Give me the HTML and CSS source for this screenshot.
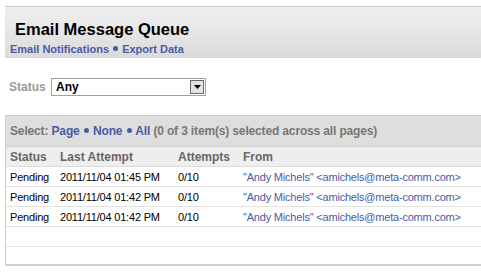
FILE: index.html
```html
<!DOCTYPE html>
<html>
<head>
<meta charset="utf-8">
<link rel="stylesheet" href="styles.css">
</head>
<body>
<div class="page">
  <div class="header">
    <h1 class="title">Email Message Queue</h1>
    <div class="nav">
      <a class="link" href="#">Email Notifications</a>
      <span class="dot"></span>
      <a class="link" href="#">Export Data</a>
    </div>
  </div>
  <div class="filter">
    <span class="filter-label">Status</span>
    <div class="select">
      <span class="select-value">Any</span>
      <span class="select-btn"><svg width="7" height="4" viewBox="0 0 7 4"><polygon points="0,0 7,0 3.5,4" fill="#000"/></svg></span>
    </div>
  </div>
  <div class="grid">
    <div class="selectbar">
      Select: <a class="link" href="#">Page</a> <span class="dot"></span> <a class="link" href="#">None</a> <span class="dot"></span> <a class="link" href="#">All</a> (0 of 3 item(s) selected across all pages)
    </div>
    <table class="table">
      <thead>
        <tr><th class="c1">Status</th><th class="c2">Last Attempt</th><th class="c3">Attempts</th><th>From</th></tr>
      </thead>
      <tbody>
        <tr><td>Pending</td><td>2011/11/04 01:45 PM</td><td>0/10</td><td class="from">"Andy Michels" &lt;amichels@meta-comm.com&gt;</td></tr>
        <tr><td>Pending</td><td>2011/11/04 01:42 PM</td><td>0/10</td><td class="from">"Andy Michels" &lt;amichels@meta-comm.com&gt;</td></tr>
        <tr><td>Pending</td><td>2011/11/04 01:42 PM</td><td>0/10</td><td class="from">"Andy Michels" &lt;amichels@meta-comm.com&gt;</td></tr>
        <tr class="empty"><td></td><td></td><td></td><td></td></tr>
        <tr class="empty last"><td></td><td></td><td></td><td></td></tr>
      </tbody>
    </table>
  </div>
</div>
</body>
</html>
```
FILE: styles.css
```css
html, body { margin: 0; padding: 0; background: #fff; }
body { font-family: "Liberation Sans", Arial, sans-serif; font-size: 11px; color: #000; }
.page { padding: 6px 0 0 5px; }
.header {
  border-top: 1px solid #c8c8c8;
  background: linear-gradient(#eeeeee, #e8e8e8 40%, #dadada);
  height: 51px;
  padding: 0 0 0 10px;
}
.title { margin: 0; padding-top: 12px; font-size: 16.5px; font-weight: bold; line-height: 20px; color: #000; }
.nav { margin-top: 3px; font-weight: bold; line-height: 14px; margin-left: -5px; }
.link { color: #4b5aa6; text-decoration: none; font-weight: bold; }
.dot {
  display: inline-block; width: 5px; height: 5px; border-radius: 50%;
  background: #4b5aa6; vertical-align: 2px; margin: 0 1px;
}
.filter { display: flex; align-items: center; margin-top: 20px; padding-left: 4px; height: 18px; }
.filter-label { color: #9a9a9a; font-size: 12px; font-weight: bold; width: 42px; }
.select {
  display: flex; align-items: center; justify-content: space-between;
  width: 153px; height: 16px; border: 1px solid #a0a0a0; background: #fff;
}
.select-value { font-weight: bold; font-size: 12px; padding-left: 4px; }
.select-btn {
  width: 14px; height: 14px; margin-right: 1px; background: #e2e2e2;
  border: 1px solid #6a6a6a; box-sizing: border-box;
  display: flex; align-items: center; justify-content: center;
}
.grid { margin-top: 19px; border-left: 1px solid #cfcfcf; }
.selectbar {
  border-top: 1px solid #c8c8c8; background: #dedede; height: 30px;
  line-height: 31px; padding-left: 4px; color: #777; font-weight: bold;
  font-size: 12px; letter-spacing: -0.15px;
  border-bottom: 1px solid #cfcfcf;
}
.selectbar .dot { vertical-align: 2px; }
.table { border-collapse: collapse; width: 100%; }
.table th {
  background: #eeeeee; color: #666; font-weight: bold; text-align: left;
  height: 19px; padding: 0 0 0 4px; font-size: 12px;
  border-bottom: 1px solid #dcdcdc;
}
.table td {
  height: 19px; padding: 0 0 0 4px; border-bottom: 1px solid #e2e2e2;
  white-space: nowrap; letter-spacing: -0.2px;
}
.table tr.last td { height: 17px; border-bottom: 2px solid #d0d0d0; }
.c1 { width: 46px; }
.c2 { width: 114px; }
.c3 { width: 61px; }
.from { color: #4b5aa6; }
```
